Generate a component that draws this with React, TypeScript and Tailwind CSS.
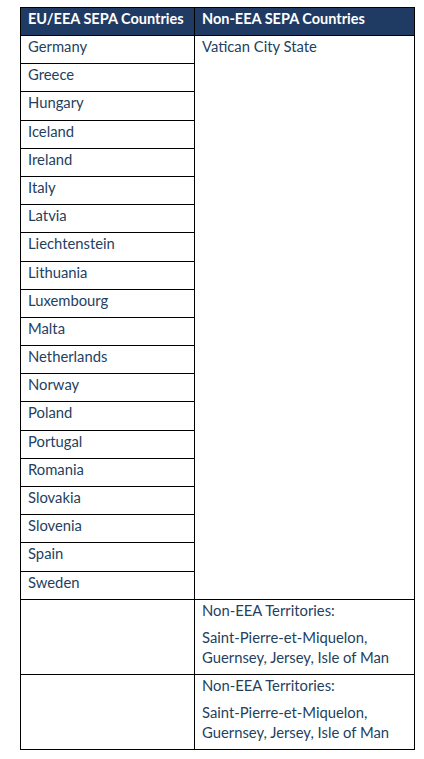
const euCountries = [
  "Germany",
  "Greece",
  "Hungary",
  "Iceland",
  "Ireland",
  "Italy",
  "Latvia",
  "Liechtenstein",
  "Lithuania",
  "Luxembourg",
  "Malta",
  "Netherlands",
  "Norway",
  "Poland",
  "Portugal",
  "Romania",
  "Slovakia",
  "Slovenia",
  "Spain",
  "Sweden",
];

function TerritoriesCell({ row }: { row: string }) {
  return (
    <div className={`col-start-2 ${row} bg-white px-[7px] text-[#243f60]`}>
      <p className="leading-[20px]">Non-EEA Territories:</p>
      <p className="mt-[7px] leading-[20px]">
        Saint-Pierre-et-Miquelon,
        <br />
        Guernsey, Jersey, Isle of Man
      </p>
    </div>
  );
}

export default function App() {
  return (
    <div className="min-h-screen bg-white pl-[20px] pt-[7px] font-['Lato',sans-serif] text-[14.8px]">
      <div className="grid w-[395px] grid-cols-[173px_219px] grid-rows-[27px_repeat(20,27.2px)_74px_74px] gap-px border border-black bg-black">
        <div className="bg-[#1f3b63] px-[7px] pt-[1px] text-[14.5px] font-bold leading-[20px] text-white">
          EU/EEA SEPA Countries
        </div>
        <div className="bg-[#1f3b63] px-[7px] pt-[1px] text-[14.5px] font-bold leading-[20px] text-white">
          Non-EEA SEPA Countries
        </div>

        {euCountries.map((name, i) => (
          <div
            key={name}
            className="col-start-1 bg-white px-[7px] leading-[20px] text-[#243f60]"
            style={{ gridRowStart: i + 2 }}
          >
            {name}
          </div>
        ))}

        <div className="col-start-2 row-start-2 row-end-[22] bg-white px-[7px] leading-[20px] text-[#243f60]">
          Vatican City State
        </div>

        <div className="col-start-1 row-start-[22] bg-white" />
        <TerritoriesCell row="row-start-[22]" />
        <div className="col-start-1 row-start-[23] bg-white" />
        <TerritoriesCell row="row-start-[23]" />
      </div>
    </div>
  );
}
